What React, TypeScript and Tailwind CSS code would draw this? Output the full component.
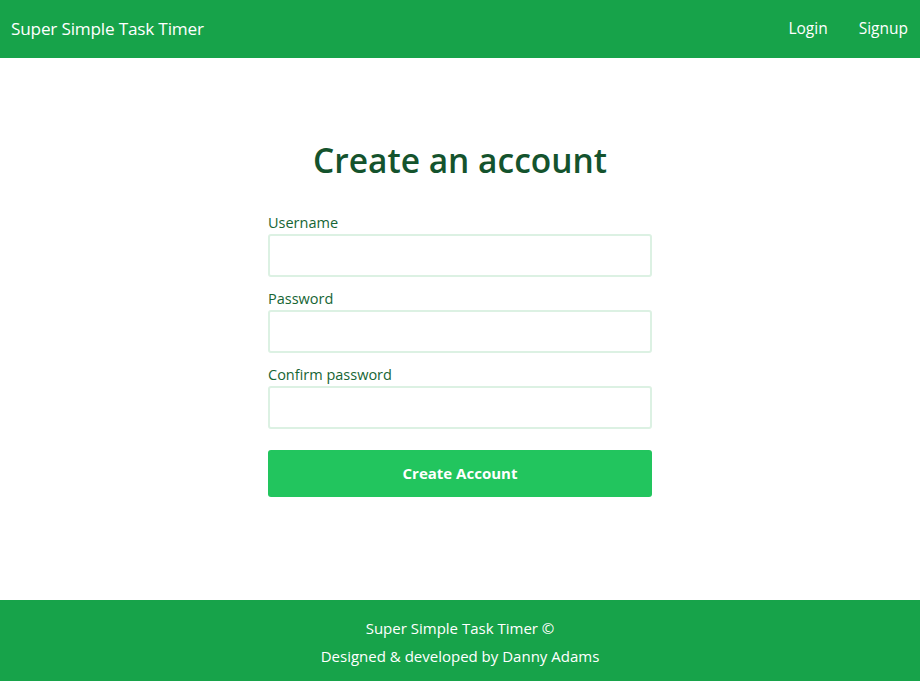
import React from "react";

export default function App() {
  const font = { fontFamily: '"Open Sans", "Noto Sans", sans-serif' };
  return (
    <div className="flex min-h-[681px] flex-col bg-white" style={font}>
      <header className="flex h-[58px] items-center justify-between bg-[#17a34a] pl-[11px] pr-[12px] text-white">
        <span className="text-[17.2px] tracking-[-0.2px]">Super Simple Task Timer</span>
        <nav className="flex gap-[31px] text-[15.5px]">
          <a>Login</a>
          <a>Signup</a>
        </nav>
      </header>
      <main className="flex flex-1 flex-col items-center pt-[80px]">
        <h1 className="mb-[31px] text-[33.5px] font-semibold leading-[44px] text-[#14532d]">Create an account</h1>
        <form className="flex w-[384px] flex-col">
          {["Username", "Password", "Confirm password"].map((l) => (
            <div key={l} className="mb-[12px] flex flex-col">
              <label className="mb-[1px] text-[14.5px] leading-[20px] text-[#166534]">{l}</label>
              <input
                type={l === "Username" ? "text" : "password"}
                className="h-[43px] rounded-[3px] border-2 border-[#dcf1e3] outline-none"
              />
            </div>
          ))}
          <button
            type="button"
            className="mt-[9px] h-[47px] rounded-[3px] bg-[#22c55e] text-[15px] font-bold text-white"
          >
            Create Account
          </button>
        </form>
      </main>
      <footer className="flex h-[81px] flex-col items-center justify-center bg-[#17a34a] pt-[2px] text-[15px] leading-[28px] text-white">
        <span>Super Simple Task Timer ©</span>
        <span>Designed &amp; developed by Danny Adams</span>
      </footer>
    </div>
  );
}
